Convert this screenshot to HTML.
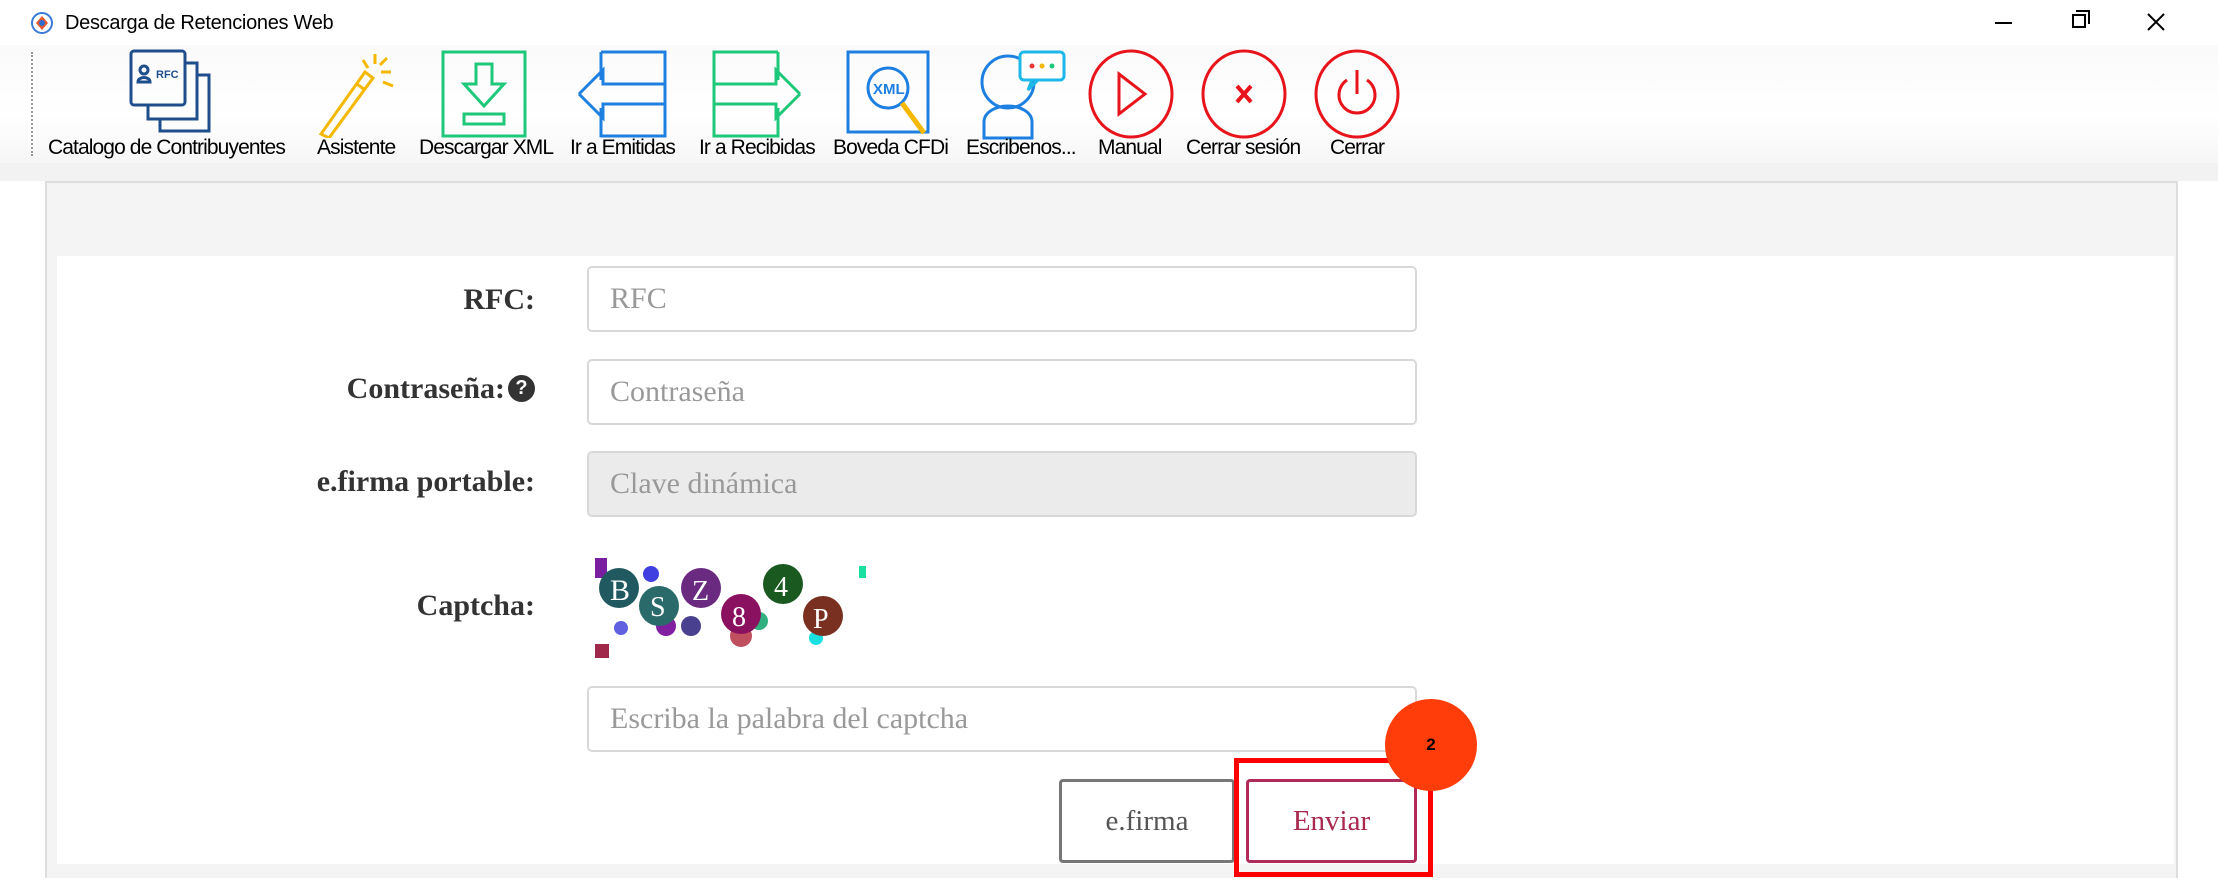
<!DOCTYPE html>
<html><head><meta charset="utf-8"><style>
*{margin:0;padding:0;box-sizing:border-box}
body{width:2218px;height:890px;background:#fff;position:relative;overflow:hidden;font-family:"Liberation Sans",sans-serif}
.a{position:absolute}
.tb{font-family:"Liberation Sans",sans-serif;font-size:21px;color:#000;letter-spacing:-0.9px;white-space:nowrap}
.lbl{position:absolute;right:1683px;font-family:"Liberation Serif",serif;font-weight:bold;font-size:30px;color:#333;white-space:nowrap}
.inp{position:absolute;left:587px;width:830px;height:66px;border:2px solid #d8d8d8;border-radius:5px;background:#fff;font-family:"Liberation Serif",serif;font-size:30px;color:#999;padding-left:21px;line-height:62px}
</style></head><body>
<svg class="a" style="left:30px;top:11px" width="24" height="24" viewBox="0 0 24 24"><circle cx="12" cy="12" r="10" fill="#fff" stroke="#3a7bd5" stroke-width="2"/><path d="M12 5l6 7-6 7-6-7z" fill="#e8552b"/><circle cx="12" cy="12" r="3" fill="#2a6fd0"/></svg>
<div class="a" style="left:65px;top:12px;font-size:20px;letter-spacing:-0.3px">Descarga de Retenciones Web</div>
<div class="a" style="left:1995px;top:22px;width:17px;height:2px;background:#000"></div>
<div class="a" style="left:2072px;top:14px;width:14px;height:14px;border:2px solid #000"></div>
<div class="a" style="left:2076px;top:10px;width:14px;height:14px;border-top:2px solid #000;border-right:2px solid #000"></div>
<svg class="a" style="left:2146px;top:12px" width="20" height="20"><path d="M2 2L18 18M18 2L2 18" stroke="#000" stroke-width="2"/></svg>
<div class="a" style="left:0;top:45px;width:2218px;height:118px;background:linear-gradient(#fafafa,#fff 60%,#f6f6f6)"></div>
<div class="a" style="left:31px;top:52px;height:104px;border-left:2px dotted #999"></div>
<div class="a" style="left:0;top:163px;width:2218px;height:18px;background:#f2f2f2"></div>
<svg class="a" style="left:128px;top:48px" width="90" height="90" viewBox="0 0 90 90" fill="none" stroke="#1f4e8c" stroke-width="3"><rect x="3" y="3" width="54" height="54" rx="3"/><path d="M57 15h12v56H20V57"/><path d="M69 27h12v56H32V71"/><circle cx="16" cy="22" r="4"/><path d="M10 34c0-6 12-6 12 0z"/><text x="28" y="30" font-size="11" fill="#1f4e8c" stroke="none" font-family="Liberation Sans" font-weight="bold">RFC</text></svg>
<svg class="a" style="left:313px;top:50px" width="90" height="88" viewBox="0 0 90 88" fill="none" stroke="#f5b800" stroke-width="3"><path d="M8 84L52 22l8 6L16 88z"/><path d="M44 34l8 6"/><path d="M62 4v10M78 22h-10M74 8l-7 7M80 36l-10-4M50 10l5 8"/></svg>
<svg class="a" style="left:441px;top:50px" width="86" height="88" viewBox="0 0 86 88" fill="none" stroke="#1dc87a" stroke-width="3"><rect x="2" y="2" width="82" height="84"/><path d="M35 14h16v20h12L43 56 23 34h12z"/><rect x="23" y="64" width="40" height="10"/></svg>
<svg class="a" style="left:577px;top:50px" width="92" height="90" viewBox="0 0 92 90" fill="none" stroke="#1d80e0" stroke-width="3"><path d="M24 2h64v84H24V58"/><path d="M24 30V2"/><path d="M2 44L26 20v14h62M2 44l24 24V54h62"/></svg>
<svg class="a" style="left:710px;top:50px" width="92" height="90" viewBox="0 0 92 90" fill="none" stroke="#1dc87a" stroke-width="3"><path d="M68 2H4v84h64V58"/><path d="M68 30V2"/><path d="M90 44L66 20v14H4M90 44L66 68V54H4"/></svg>
<svg class="a" style="left:846px;top:50px" width="90" height="90" viewBox="0 0 90 90" fill="none" stroke="#1d80e0" stroke-width="3"><rect x="2" y="2" width="80" height="80"/><circle cx="42" cy="38" r="20"/><text x="27" y="44" font-size="15" fill="#1d80e0" stroke="none" font-family="Liberation Sans" font-weight="bold">XML</text><path d="M56 53l22 30" stroke="#f5b800" stroke-width="5"/></svg>
<svg class="a" style="left:976px;top:48px" width="92" height="92" viewBox="0 0 92 92" fill="none" stroke="#1d80e0" stroke-width="3"><circle cx="32" cy="34" r="26"/><path d="M8 90V74c0-10 12-16 24-16s24 6 24 16v16z"/><rect x="44" y="4" width="44" height="28" rx="4" fill="#fff" stroke="#1db8e8"/><path d="M56 32l-4 10 10-10" stroke="#1db8e8"/><circle cx="56" cy="18" r="2.5" fill="#e33" stroke="none"/><circle cx="66" cy="18" r="2.5" fill="#f5b800" stroke="none"/><circle cx="76" cy="18" r="2.5" fill="#1dc87a" stroke="none"/></svg>
<svg class="a" style="left:1087px;top:48px" width="88" height="92" viewBox="0 0 88 92" fill="none" stroke="#e8141c" stroke-width="3"><ellipse cx="44" cy="46" rx="41" ry="43"/><path d="M32 26l26 20-26 20z"/></svg>
<svg class="a" style="left:1200px;top:48px" width="88" height="92" viewBox="0 0 88 92" fill="none" stroke="#e8141c" stroke-width="3"><ellipse cx="44" cy="46" rx="41" ry="43"/><path d="M37 38l14 16M51 38L37 54" stroke-width="4"/></svg>
<svg class="a" style="left:1313px;top:48px" width="88" height="92" viewBox="0 0 88 92" fill="none" stroke="#e8141c" stroke-width="3"><ellipse cx="44" cy="46" rx="41" ry="43"/><path d="M34 32a18 18 0 1 0 20 0M44 22v24"/></svg>
<div class="a tb" style="left:48px;top:136px">Catalogo de Contribuyentes</div>
<div class="a tb" style="left:317px;top:136px">Asistente</div>
<div class="a tb" style="left:419px;top:136px">Descargar XML</div>
<div class="a tb" style="left:570px;top:136px">Ir a Emitidas</div>
<div class="a tb" style="left:699px;top:136px">Ir a Recibidas</div>
<div class="a tb" style="left:833px;top:136px">Boveda CFDi</div>
<div class="a tb" style="left:966px;top:136px">Escribenos...</div>
<div class="a tb" style="left:1098px;top:136px">Manual</div>
<div class="a tb" style="left:1186px;top:136px">Cerrar sesión</div>
<div class="a tb" style="left:1330px;top:136px">Cerrar</div>
<div class="a" style="left:45px;top:181px;width:2133px;height:697px;border:2px solid #ddd;border-bottom:none;background:#f4f4f4"></div>
<div class="a" style="left:57px;top:256px;width:2117px;height:608px;background:#fff"></div>
<div class="lbl" style="top:283px">RFC:</div>
<div class="lbl" style="top:372px">Contraseña:<span style="display:inline-block;width:27px;height:27px;border-radius:50%;background:#333;color:#fff;font-family:'Liberation Sans';font-size:20px;line-height:27px;text-align:center;vertical-align:4px;margin-left:3px">?</span></div>
<div class="lbl" style="top:465px">e.firma portable:</div>
<div class="lbl" style="top:589px">Captcha:</div>
<div class="inp" style="top:266px">RFC</div>
<div class="inp" style="top:359px">Contraseña</div>
<div class="inp" style="top:451px;background:#ebebeb">Clave dinámica</div>
<div class="inp" style="top:686px">Escriba la palabra del captcha</div>
<svg class="a" style="left:591px;top:556px" width="280" height="105" viewBox="0 0 280 105">
<rect x="4" y="2" width="12" height="20" fill="#7a1fa0"/><rect x="4" y="88" width="14" height="14" fill="#a0284a"/><rect x="268" y="10" width="7" height="12" fill="#18e0a0"/>
<circle cx="60" cy="18" r="8" fill="#4040e0"/><circle cx="118" cy="32" r="6" fill="#9020a0"/><circle cx="75" cy="70" r="10" fill="#8020a0"/><circle cx="100" cy="70" r="10" fill="#4a4090"/><circle cx="30" cy="72" r="7" fill="#6060e0"/><circle cx="225" cy="82" r="7" fill="#18e0e0"/><circle cx="168" cy="65" r="9" fill="#30b080"/><circle cx="150" cy="80" r="11" fill="#c05060"/>
<circle cx="28" cy="32" r="20" fill="#205a60"/><text x="19" y="44" font-family="Liberation Serif" font-size="30" fill="#fff">B</text>
<circle cx="68" cy="50" r="20" fill="#2a6a6a"/><text x="59" y="60" font-family="Liberation Serif" font-size="28" fill="#fff">S</text>
<circle cx="110" cy="32" r="20" fill="#6a2a80"/><text x="101" y="44" font-family="Liberation Serif" font-size="28" fill="#fff">Z</text>
<circle cx="150" cy="58" r="20" fill="#8a1060"/><text x="141" y="70" font-family="Liberation Serif" font-size="28" fill="#fff">8</text>
<circle cx="192" cy="28" r="20" fill="#1a5a20"/><text x="183" y="40" font-family="Liberation Serif" font-size="28" fill="#fff">4</text>
<circle cx="232" cy="60" r="20" fill="#7a3020"/><text x="222" y="72" font-family="Liberation Serif" font-size="28" fill="#fff">P</text>
</svg>
<div class="a" style="left:1059px;top:779px;width:176px;height:84px;border:3px solid #777;border-radius:4px;font-family:'Liberation Serif',serif;font-size:29px;color:#555;text-align:center;line-height:78px;background:#fff">e.firma</div>
<div class="a" style="left:1246px;top:779px;width:171px;height:84px;border:3px solid #b02a5a;border-radius:4px;font-family:'Liberation Serif',serif;font-size:29px;color:#a8284e;text-align:center;line-height:78px;background:#fff">Enviar</div>
<div class="a" style="left:1234px;top:758px;width:199px;height:119px;border:5px solid #f00"></div>
<div class="a" style="left:1385px;top:699px;width:92px;height:92px;border-radius:50%;background:#ff3d0a;font-weight:bold;font-size:17px;text-align:center;line-height:92px;color:#000">2</div>
</body></html>
